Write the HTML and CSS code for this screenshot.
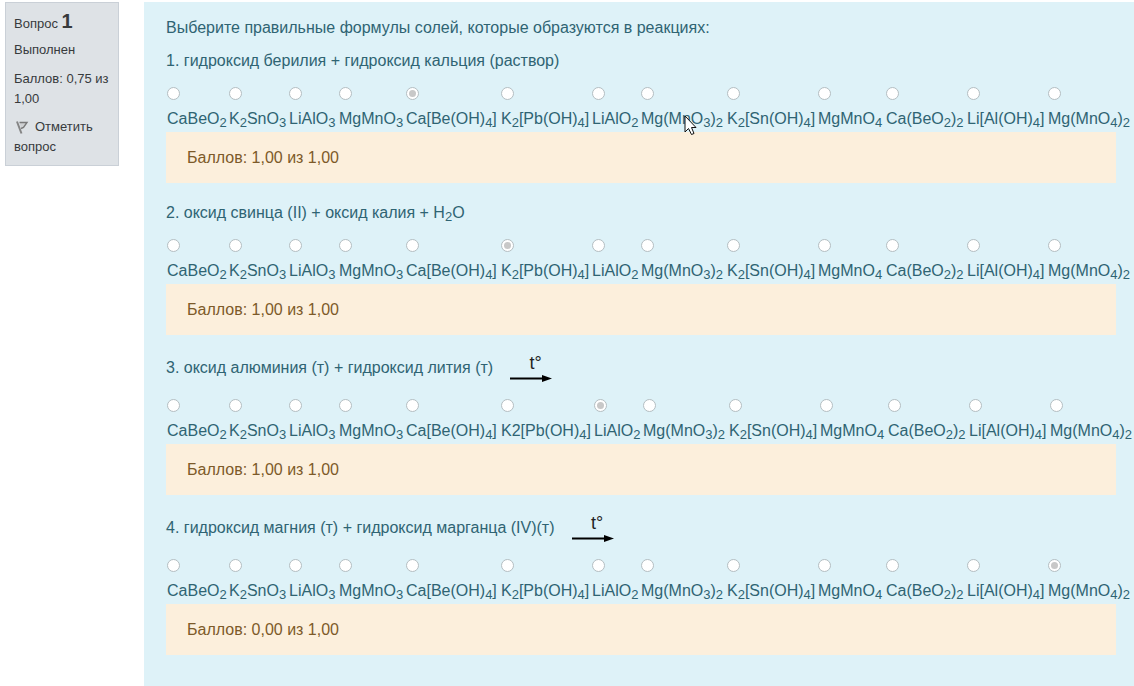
FILE: index.html
```html
<!DOCTYPE html>
<html lang="ru">
<head>
<meta charset="utf-8">
<meta name="viewport" content="width=device-width, initial-scale=1">
<title>Вопрос 1</title>
<link rel="stylesheet" href="styles.css">
</head>
<body>
<div class="question">
  <aside class="info">
    <h3 class="info-title">Вопрос <span class="number">1</span></h3>
    <p class="state">Выполнен</p>
    <p class="grade">Баллов: 0,75 из 1,00</p>
    <a class="flag" href="#"><svg class="flag-icon" width="16" height="16" viewBox="0 0 16 16" aria-hidden="true"><path d="M3 2.500 7.500 14.500" stroke="#858585" stroke-width="2" fill="none"/><path d="M5.500 3.500H13L9.500 8.500 7 9.500" fill="#cfd1d3" stroke="#7a7a7a" stroke-width="1.400"/></svg>Отметить вопрос</a>
  </aside>
  <main class="content">
    <p class="line">Выберите правильные формулы солей, которые образуются в реакциях:</p>

    <section class="part">
      <p class="line">1. гидроксид берилия + гидроксид кальция (раствор)</p>
      <div class="choices">
        <label class="choice"><input type="radio" name="q1" disabled><span>CaBeO<sub>2</sub></span></label>
        <label class="choice"><input type="radio" name="q1" disabled><span>K<sub>2</sub>SnO<sub>3</sub></span></label>
        <label class="choice"><input type="radio" name="q1" disabled><span>LiAlO<sub>3</sub></span></label>
        <label class="choice"><input type="radio" name="q1" disabled><span>MgMnO<sub>3</sub></span></label>
        <label class="choice"><input type="radio" name="q1" disabled checked><span>Ca[Be(OH)<sub>4</sub>]</span></label>
        <label class="choice"><input type="radio" name="q1" disabled><span>K<sub>2</sub>[Pb(OH)<sub>4</sub>]</span></label>
        <label class="choice"><input type="radio" name="q1" disabled><span>LiAlO<sub>2</sub></span></label>
        <label class="choice"><input type="radio" name="q1" disabled><span>Mg(MnO<sub>3</sub>)<sub>2</sub></span><svg class="cursor" width="13" height="21" viewBox="0 0 13 21" aria-hidden="true"><path d="M1 1V17L4.500 13.500 7.500 19.500 10 18.500 7.500 12.500H12Z" fill="#fff" stroke="#111" stroke-width="1"/></svg></label>
        <label class="choice"><input type="radio" name="q1" disabled><span>K<sub>2</sub>[Sn(OH)<sub>4</sub>]</span></label>
        <label class="choice"><input type="radio" name="q1" disabled><span>MgMnO<sub>4</sub></span></label>
        <label class="choice"><input type="radio" name="q1" disabled><span>Ca(BeO<sub>2</sub>)<sub>2</sub></span></label>
        <label class="choice"><input type="radio" name="q1" disabled><span>Li[Al(OH)<sub>4</sub>]</span></label>
        <label class="choice"><input type="radio" name="q1" disabled><span>Mg(MnO<sub>4</sub>)<sub>2</sub></span></label>
      </div>
      <div class="outcome">Баллов: 1,00 из 1,00</div>
    </section>

    <section class="part">
      <p class="line">2. оксид свинца (II) + оксид калия + H<sub>2</sub>O</p>
      <div class="choices">
        <label class="choice"><input type="radio" name="q2" disabled><span>CaBeO<sub>2</sub></span></label>
        <label class="choice"><input type="radio" name="q2" disabled><span>K<sub>2</sub>SnO<sub>3</sub></span></label>
        <label class="choice"><input type="radio" name="q2" disabled><span>LiAlO<sub>3</sub></span></label>
        <label class="choice"><input type="radio" name="q2" disabled><span>MgMnO<sub>3</sub></span></label>
        <label class="choice"><input type="radio" name="q2" disabled><span>Ca[Be(OH)<sub>4</sub>]</span></label>
        <label class="choice"><input type="radio" name="q2" disabled checked><span>K<sub>2</sub>[Pb(OH)<sub>4</sub>]</span></label>
        <label class="choice"><input type="radio" name="q2" disabled><span>LiAlO<sub>2</sub></span></label>
        <label class="choice"><input type="radio" name="q2" disabled><span>Mg(MnO<sub>3</sub>)<sub>2</sub></span></label>
        <label class="choice"><input type="radio" name="q2" disabled><span>K<sub>2</sub>[Sn(OH)<sub>4</sub>]</span></label>
        <label class="choice"><input type="radio" name="q2" disabled><span>MgMnO<sub>4</sub></span></label>
        <label class="choice"><input type="radio" name="q2" disabled><span>Ca(BeO<sub>2</sub>)<sub>2</sub></span></label>
        <label class="choice"><input type="radio" name="q2" disabled><span>Li[Al(OH)<sub>4</sub>]</span></label>
        <label class="choice"><input type="radio" name="q2" disabled><span>Mg(MnO<sub>4</sub>)<sub>2</sub></span></label>
      </div>
      <div class="outcome">Баллов: 1,00 из 1,00</div>
    </section>

    <section class="part">
      <p class="line heated">3. оксид алюминия (т) + гидроксид лития (т) <span class="reaction"><span class="temp">t°</span><svg width="43" height="7" viewBox="0 0 43 7" aria-hidden="true"><path d="M0 3.500H34" stroke="#000" stroke-width="2"/><path d="M32 0 42 3.500 32 7Z"/></svg></span></p>
      <div class="choices choices-wide">
        <label class="choice"><input type="radio" name="q3" disabled><span>CaBeO<sub>2</sub></span></label>
        <label class="choice"><input type="radio" name="q3" disabled><span>K<sub>2</sub>SnO<sub>3</sub></span></label>
        <label class="choice"><input type="radio" name="q3" disabled><span>LiAlO<sub>3</sub></span></label>
        <label class="choice"><input type="radio" name="q3" disabled><span>MgMnO<sub>3</sub></span></label>
        <label class="choice"><input type="radio" name="q3" disabled><span>Ca[Be(OH)<sub>4</sub>]</span></label>
        <label class="choice"><input type="radio" name="q3" disabled><span>K2[Pb(OH)<sub>4</sub>]</span></label>
        <label class="choice"><input type="radio" name="q3" disabled checked><span>LiAlO<sub>2</sub></span></label>
        <label class="choice"><input type="radio" name="q3" disabled><span>Mg(MnO<sub>3</sub>)<sub>2</sub></span></label>
        <label class="choice"><input type="radio" name="q3" disabled><span>K<sub>2</sub>[Sn(OH)<sub>4</sub>]</span></label>
        <label class="choice"><input type="radio" name="q3" disabled><span>MgMnO<sub>4</sub></span></label>
        <label class="choice"><input type="radio" name="q3" disabled><span>Ca(BeO<sub>2</sub>)<sub>2</sub></span></label>
        <label class="choice"><input type="radio" name="q3" disabled><span>Li[Al(OH)<sub>4</sub>]</span></label>
        <label class="choice"><input type="radio" name="q3" disabled><span>Mg(MnO<sub>4</sub>)<sub>2</sub></span></label>
      </div>
      <div class="outcome">Баллов: 1,00 из 1,00</div>
    </section>

    <section class="part">
      <p class="line heated">4. гидроксид магния (т) + гидроксид марганца (IV)(т) <span class="reaction"><span class="temp">t°</span><svg width="43" height="7" viewBox="0 0 43 7" aria-hidden="true"><path d="M0 3.500H34" stroke="#000" stroke-width="2"/><path d="M32 0 42 3.500 32 7Z"/></svg></span></p>
      <div class="choices">
        <label class="choice"><input type="radio" name="q4" disabled><span>CaBeO<sub>2</sub></span></label>
        <label class="choice"><input type="radio" name="q4" disabled><span>K<sub>2</sub>SnO<sub>3</sub></span></label>
        <label class="choice"><input type="radio" name="q4" disabled><span>LiAlO<sub>3</sub></span></label>
        <label class="choice"><input type="radio" name="q4" disabled><span>MgMnO<sub>3</sub></span></label>
        <label class="choice"><input type="radio" name="q4" disabled><span>Ca[Be(OH)<sub>4</sub>]</span></label>
        <label class="choice"><input type="radio" name="q4" disabled><span>K<sub>2</sub>[Pb(OH)<sub>4</sub>]</span></label>
        <label class="choice"><input type="radio" name="q4" disabled><span>LiAlO<sub>2</sub></span></label>
        <label class="choice"><input type="radio" name="q4" disabled><span>Mg(MnO<sub>3</sub>)<sub>2</sub></span></label>
        <label class="choice"><input type="radio" name="q4" disabled><span>K<sub>2</sub>[Sn(OH)<sub>4</sub>]</span></label>
        <label class="choice"><input type="radio" name="q4" disabled><span>MgMnO<sub>4</sub></span></label>
        <label class="choice"><input type="radio" name="q4" disabled><span>Ca(BeO<sub>2</sub>)<sub>2</sub></span></label>
        <label class="choice"><input type="radio" name="q4" disabled><span>Li[Al(OH)<sub>4</sub>]</span></label>
        <label class="choice"><input type="radio" name="q4" disabled checked><span>Mg(MnO<sub>4</sub>)<sub>2</sub></span></label>
      </div>
      <div class="outcome">Баллов: 0,00 из 1,00</div>
    </section>
  </main>
</div>
</body>
</html>
```
FILE: styles.css
```css
* {
  box-sizing: border-box;
}

body {
  margin: 0;
  background: #fff;
  font: 16px/24px "Liberation Sans", Arial, sans-serif;
}

.question {
  display: flex;
  align-items: flex-start;
  gap: 25px;
  min-height: 100vh;
  padding: 2px 0 0 5px;
}

.info {
  flex: 0 0 114px;
  padding: 8px;
  border: 1px solid #cad0d7;
  background: #dee2e6;
  color: #373a3c;
  font-size: 13px;
  line-height: 20px;
}

.info-title {
  margin: 0 0 6px;
  font-size: 13px;
  font-weight: 400;
  line-height: 20px;
}

.number {
  font-size: 20px;
  font-weight: 700;
}

.state {
  margin: 0 0 9px;
}

.grade {
  margin: 0 0 8px;
}

.flag {
  display: block;
  color: inherit;
  text-decoration: none;
}

.flag-icon {
  margin-right: 5px;
  vertical-align: -4px;
}

.content {
  flex: 1;
  min-width: 0;
  align-self: stretch;
  padding: 14px 18px 30px 22px;
  background: #def2f8;
  color: #2f6473;
}

.line {
  margin: 0 0 9px;
}

.line sub,
.choice sub {
  font-size: 13px;
  line-height: 0;
  vertical-align: -3px;
}

.part {
  margin-bottom: 18px;
}

.part:last-child {
  margin-bottom: 0;
}

.choices {
  display: grid;
  grid-template-columns: 60px 58px 48px 65px 93px 89px 47px 84px 89px 66px 79px 79px auto;
  gap: 2px;
  padding: 5px 1px 1px;
}

.choices-wide {
  grid-template-columns: 60px 58px 48px 65px 93px 91px 47px 84px 89px 66px 79px 79px auto;
}

.choice {
  display: flex;
  flex-direction: column;
  gap: 7px;
  position: relative;
  white-space: nowrap;
}

.choice input {
  appearance: none;
  display: grid;
  place-items: center;
  width: 13px;
  height: 13px;
  margin: 0;
  border: 1px solid #b4bec2;
  border-radius: 50%;
  background: #fff;
}

.choice input:checked::before {
  content: "";
  width: 7px;
  height: 7px;
  border-radius: 50%;
  background: #c8c8c8;
}

.cursor {
  position: absolute;
  left: 43px;
  top: 28px;
}

.outcome {
  padding: 14px 21px 13px;
  background: #fcefdc;
  color: #7d5a29;
}

.heated {
  display: flex;
  align-items: center;
  gap: 17px;
  margin-bottom: 12px;
}

.reaction {
  display: flex;
  flex-direction: column;
  align-items: center;
  gap: 2px;
  color: #222;
  line-height: 20px;
}

.temp {
  padding-left: 8px;
  font-size: 18px;
}
```
